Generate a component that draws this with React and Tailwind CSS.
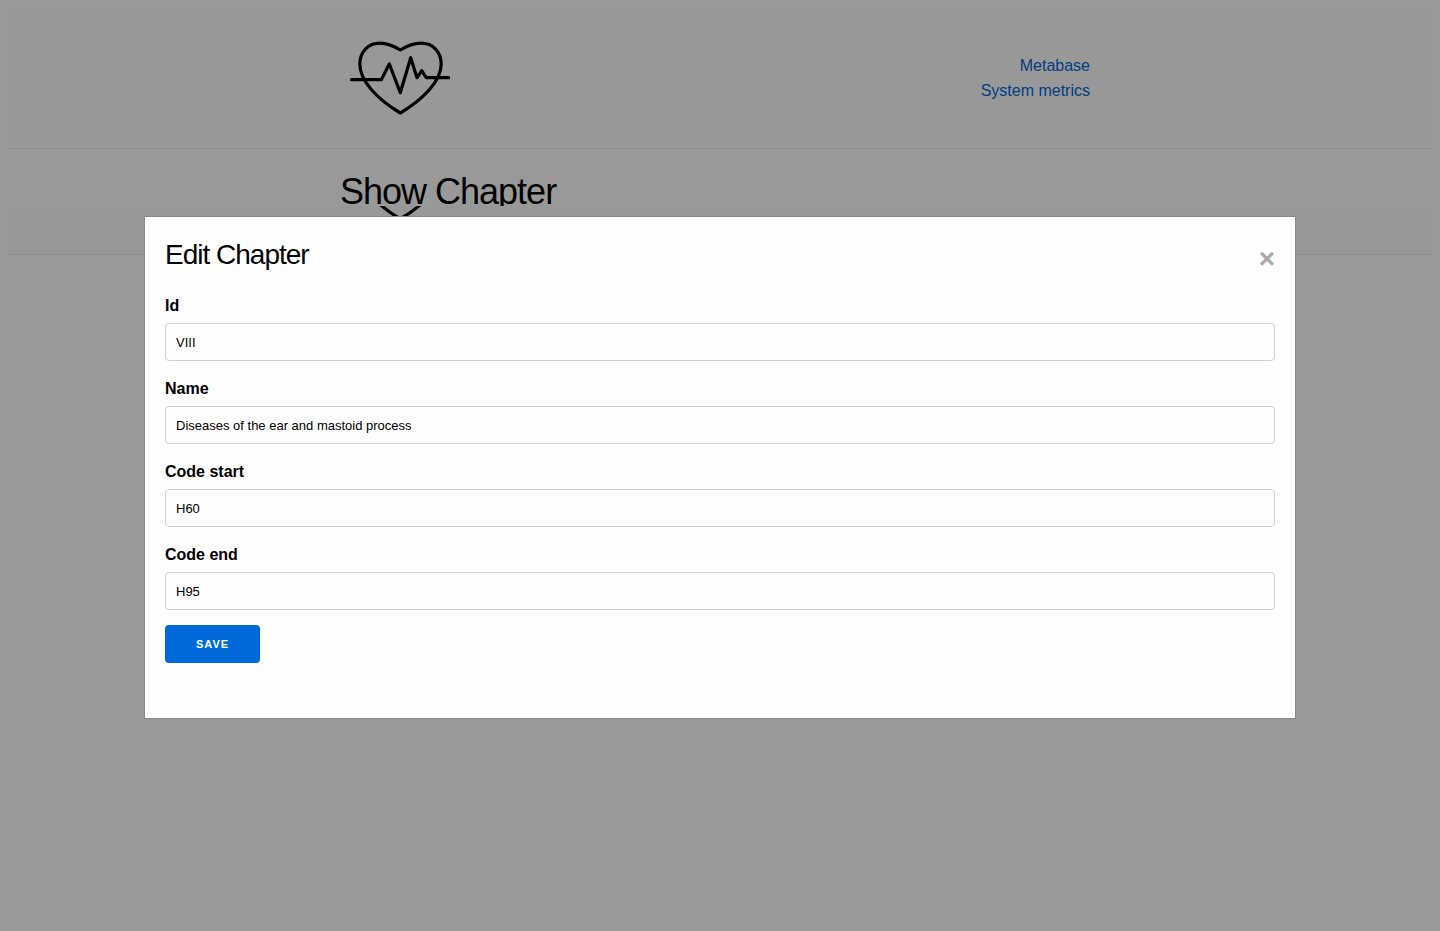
import React from "react";

function HeartLogo() {
  return (
    <svg
      viewBox="0 0 100 100"
      className="h-[100px] w-[100px] shrink-0"
      fill="none"
      stroke="#000"
      strokeWidth="3.2"
      strokeLinecap="round"
      strokeLinejoin="round"
      role="img"
      aria-label="Home"
    >
      <path d="M50.3 22C43 17.5 36.5 15.1 30 15.1C18 15.1 9.8 24 9.8 36C9.8 53 27.5 71.5 50.3 85C73.1 71.5 91.2 53 91.2 36C91.2 24 83 15.1 71 15.1C64.5 15.1 57.6 17.5 50.3 22Z" />
      <path d="M1.5 51.7H31.3L39.3 36L50.3 64.7L60.7 29.7L67 49.7L71.7 42.7L76.3 49.7H98.5" />
    </svg>
  );
}

function HeaderContent({ children }) {
  return (
    <div className="mx-auto flex w-full max-w-[800px] items-center justify-between px-[30px] py-5">
      <a href="#home">
        <HeartLogo />
      </a>
      {children}
    </div>
  );
}

const fields = [
  { id: "id", label: "Id", value: "VIII" },
  { id: "name", label: "Name", value: "Diseases of the ear and mastoid process" },
  { id: "code_start", label: "Code start", value: "H60" },
  { id: "code_end", label: "Code end", value: "H95" },
];

function EditModal() {
  return (
    <div className="fixed inset-0 overflow-auto bg-black/40">
      <div
        role="dialog"
        aria-modal="true"
        aria-labelledby="edit-title"
        className="mx-auto my-[15%] w-4/5 border border-[#888] bg-[#fefefe] px-5 pt-5 pb-[55px]"
      >
        <div className="flex items-start justify-between pb-3">
          <h2 id="edit-title" className="text-[28px] leading-9 tracking-[-1px]">
            Edit Chapter
          </h2>
          <button
            type="button"
            aria-label="Close"
            className="text-[28px] leading-11 font-bold text-[#aaa]"
          >
            ×
          </button>
        </div>
        <form onSubmit={(e) => e.preventDefault()}>
          {fields.map((f) => (
            <div key={f.id} className="mb-[15px]">
              <label htmlFor={f.id} className="mb-[5px] block leading-[25px] font-bold">
                {f.label}
              </label>
              <input
                id={f.id}
                type="text"
                defaultValue={f.value}
                className="block h-[38px] w-full rounded border border-[#d1d1d1] px-[10px] text-[13px]"
              />
            </div>
          ))}
          <button
            type="submit"
            className="block h-[38px] rounded bg-[#0069d9] px-[31px] text-[11px] leading-[38px] font-bold tracking-[1px] text-white uppercase"
          >
            Save
          </button>
        </form>
      </div>
    </div>
  );
}

export default function App() {
  return (
    <div className="min-h-screen bg-white p-2 font-['Liberation_Sans',Arial,sans-serif] text-base text-black">
      <header className="border-b border-[#eaeaea] bg-[#fdfdfd]">
        <HeaderContent>
          <nav className="flex flex-col text-right leading-[25px] text-[#0069d9]">
            <a href="#metabase">Metabase</a>
            <a href="#metrics">System metrics</a>
          </nav>
        </HeaderContent>
      </header>
      <main className="mx-auto h-[57px] w-full max-w-[800px] px-5 pt-5">
        <h1 className="text-[36px] leading-[45px] tracking-[-1px]">Show Chapter</h1>
      </main>
      <div className="relative flex h-[49px] items-end overflow-hidden border-b border-[#eaeaea] bg-[#fdfdfd]">
        <HeaderContent />
      </div>
      <EditModal />
    </div>
  );
}
